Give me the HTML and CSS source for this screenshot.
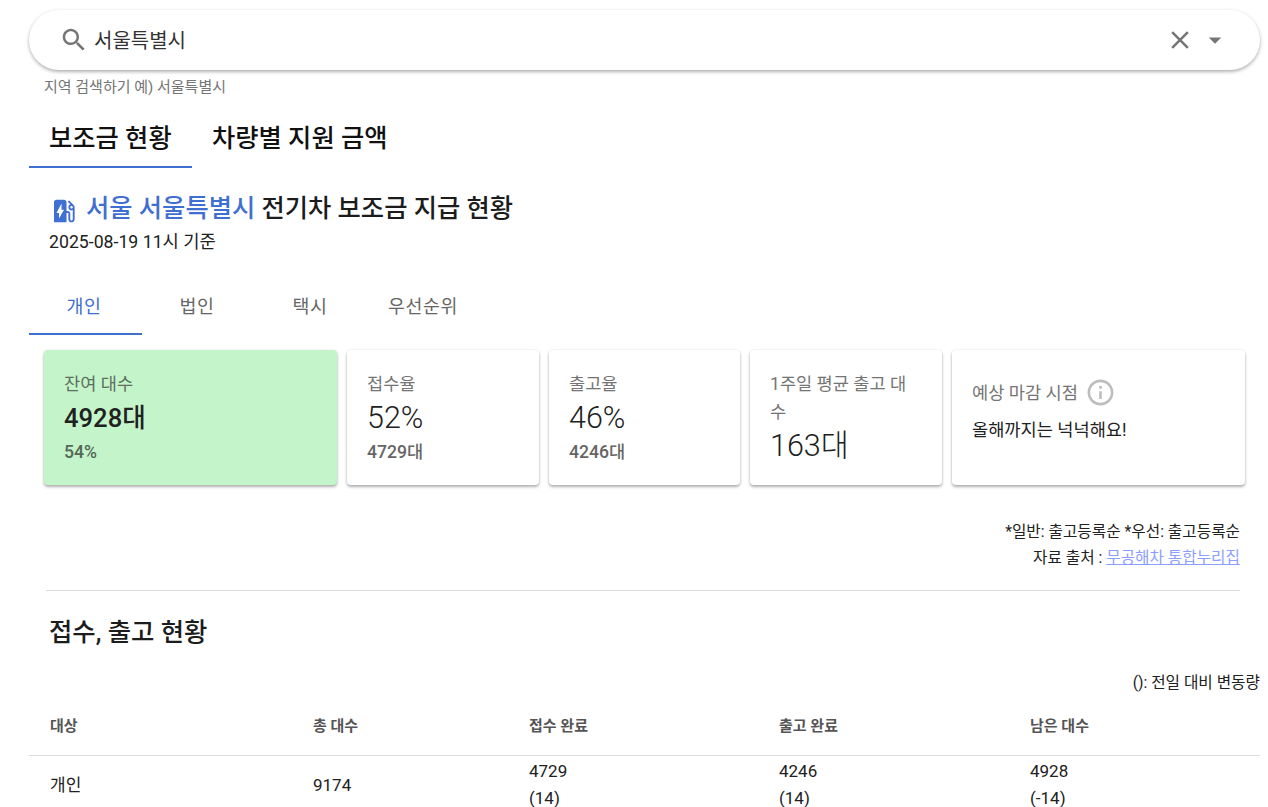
FILE: index.html
```html
<!DOCTYPE html>
<html lang="ko">
<head>
<meta charset="utf-8">
<title>전기차 보조금 지급 현황</title>
<link rel="stylesheet" href="styles.css">
</head>
<body>
<div class="page">
  <div class="search">
    <svg class="icon-search" viewBox="0 0 24 24"><path d="M15.5 14h-.79l-.28-.27C15.41 12.59 16 11.11 16 9.5 16 5.91 13.09 3 9.5 3S3 5.91 3 9.5 5.91 16 9.5 16c1.61 0 3.09-.59 4.23-1.57l.27.28v.79l5 4.99L20.49 19l-4.99-5zm-6 0C7.01 14 5 11.99 5 9.5S7.01 5 9.5 5 14 7.01 14 9.5 11.99 14 9.5 14z"/></svg>
    <span class="search-value">서울특별시</span>
    <svg class="icon-clear" viewBox="0 0 24 24"><path d="M19 6.41 17.59 5 12 10.59 6.41 5 5 6.41 10.59 12 5 17.59 6.41 19 12 13.41 17.59 19 19 17.59 13.41 12z"/></svg>
    <svg class="icon-drop" viewBox="0 0 24 24"><path d="M7 10l5 5 5-5z"/></svg>
  </div>
  <div class="helper">지역 검색하기 예) 서울특별시</div>

  <div class="main-tabs">
    <div class="main-tab active">보조금 현황</div>
    <div class="main-tab">차량별 지원 금액</div>
  </div>

  <div class="title-block">
    <h1 class="title"><svg class="icon-ev" viewBox="0 0 24 24"><path d="M19.77 7.23l.01-.01-3.72-3.72L15 4.56l2.11 2.11C16.17 7 15.5 7.9 15.5 9c0 1.38 1.12 2.5 2.5 2.5.36 0 .69-.08 1-.21v7.21c0 .55-.45 1-1 1s-1-.45-1-1V14c0-1.1-.9-2-2-2h-1V5c0-1.1-.9-2-2-2H6c-1.1 0-2 .9-2 2v16h10v-7.5h1.5v5c0 1.38 1.12 2.5 2.5 2.5s2.5-1.12 2.5-2.5V9c0-.69-.28-1.32-.73-1.77zM18 10c-.55 0-1-.45-1-1s.45-1 1-1 1 .45 1 1-.45 1-1 1zM8 18v-4.500H6L10 6v5h2l-4 7z"/></svg><span class="accent">서울 서울특별시</span> 전기차 보조금 지급 현황</h1>
    <div class="date">2025-08-19 11시 기준</div>
  </div>

  <div class="sub-tabs">
    <div class="sub-tab active">개인</div>
    <div class="sub-tab">법인</div>
    <div class="sub-tab">택시</div>
    <div class="sub-tab">우선순위</div>
  </div>

  <div class="cards">
    <div class="card card-green">
      <div class="card-label">잔여 대수</div>
      <div class="card-value strong">4928대</div>
      <div class="card-sub">54%</div>
    </div>
    <div class="card card-a">
      <div class="card-label">접수율</div>
      <div class="card-value">52%</div>
      <div class="card-sub">4729대</div>
    </div>
    <div class="card card-a">
      <div class="card-label">출고율</div>
      <div class="card-value">46%</div>
      <div class="card-sub">4246대</div>
    </div>
    <div class="card card-a">
      <div class="card-label">1주일 평균 출고 대수</div>
      <div class="card-value">163대</div>
    </div>
    <div class="card card-end">
      <div class="end-head">
        <span class="card-label">예상 마감 시점</span>
        <svg class="icon-info" viewBox="0 0 24 24"><path d="M11 7h2v2h-2zm0 4h2v6h-2zm1-9C6.48 2 2 6.48 2 12s4.480 10 10 10 10-4.480 10-10S17.520 2 12 2zm0 18c-4.410 0-8-3.590-8-8s3.590-8 8-8 8 3.590 8 8-3.590 8-8 8z"/></svg>
      </div>
      <div class="end-text">올해까지는 넉넉해요!</div>
    </div>
  </div>

  <div class="notes">
    <div>*일반: 출고등록순 *우선: 출고등록순</div>
    <div>자료 출처 : <a class="source" href="#">무공해차 통합누리집</a></div>
  </div>
  <hr class="divider">

  <h2 class="section-title">접수, 출고 현황</h2>
  <div class="table-note">(): 전일 대비 변동량</div>

  <div class="table">
    <div class="row head">
      <div>대상</div><div>총 대수</div><div>접수 완료</div><div>출고 완료</div><div>남은 대수</div>
    </div>
    <div class="row body-row">
      <div>개인</div><div>9174</div><div>4729<br>(14)</div><div>4246<br>(14)</div><div>4928<br>(-14)</div>
    </div>
  </div>
</div>
</body>
</html>
```
FILE: styles.css
```css
* { box-sizing: border-box; }
html, body { margin: 0; height: 807px; overflow: hidden; background: #fff; }
body { font-family: Roboto, "Noto Sans CJK KR", sans-serif; color: #212121; }
.page { padding: 10px 8px 0 29px; }

.search { height: 60px; width: 1231px; border-radius: 30px; background: #fff; display: flex; align-items: center; padding: 0 30px 0 30px; box-shadow: 0 2px 4px -1px rgba(0,0,0,.35), 0 1px 4px rgba(0,0,0,.1); }
.search svg { fill: #757575; flex: none; }
.icon-search { width: 30px; height: 30px; }
.search-value { flex: 1; font-size: 20px; margin: 0 0 2px 5px; color: #333; }
.icon-clear { width: 30px; height: 30px; margin-right: 5px; }
.icon-drop { width: 30px; height: 30px; }

.helper { margin: 8px 0 0 15px; font-size: 15px; line-height: 18px; color: #757575; }

.main-tabs { display: flex; margin-top: 12px; }
.main-tab { font-size: 25.3px; font-weight: 500; line-height: 32px; height: 60px; padding: 15px 20px 0; color: #111; white-space: nowrap; }
.main-tab.active { border-bottom: 2px solid #3f6fd0; width: 163px; }

.title-block { padding: 23px 0 0 20px; }
.title { margin: 0; font-size: 25.3px; font-weight: 500; line-height: 36px; color: #1c1c1c; }
.icon-ev { width: 30px; height: 30px; fill: #3f6fd0; margin-right: 7px; vertical-align: -9px; }
.accent { color: #3f6fd0; }
.date { font-size: 17.7px; line-height: 24px; margin-top: 3px; }

.sub-tabs { display: flex; margin-top: 25px; }
.sub-tab { width: 113px; height: 56px; font-size: 18.4px; letter-spacing: .6px; text-align: center; line-height: 56px; color: #666; padding-right: 3px; }
.sub-tab.active { color: #3f6fd0; border-bottom: 2px solid #3f6fd0; }

.cards { display: flex; gap: 10px; margin: 15px 0 0 15px; width: 1201px; height: 135px; }
.card { background: #fff; border-radius: 4px; padding: 20px; box-shadow: 0 2px 3px rgba(0,0,0,.3), 0 0 3px rgba(0,0,0,.08); }
.card-green { background: #c4f4c9; width: 293px; }
.card-a { width: 192px; }
.card-a:nth-child(3) { width: 191px; }
.card-end { width: 293px; }
.card-label { font-size: 17.6px; line-height: 28px; color: #757575; display: block; }
.card-green .card-label { color: #5d6f5f; }
.card-value { font-size: 30.5px; font-weight: 300; line-height: 40px; color: #212121; }
.card-value.strong { font-size: 25.6px; font-weight: 500; }
.card-sub { font-size: 17.6px; font-weight: 500; line-height: 26px; margin-top: 1px; color: #666; }
.card-green .card-sub { color: #546856; }
.end-head { display: flex; align-items: center; gap: 7px; margin-top: 7px; }
.icon-info { width: 31px; height: 31px; fill: #bdbdbd; }
.end-text { font-size: 17.6px; line-height: 24px; margin-top: 10px; color: #212121; }

.notes { margin: 34px 20px 0 0; text-align: right; font-size: 15.7px; line-height: 26px; color: #212121; }
.source { color: #8c9eff; }
.divider { border: 0; border-top: 1px solid #ddd; margin: 19px 20px 0 17px; }

.section-title { margin: 23px 0 0 20px; font-size: 25.4px; font-weight: 500; line-height: 36px; color: #1c1c1c; }
.table-note { margin-top: 23px; text-align: right; font-size: 15.7px; line-height: 20px; color: #212121; }

.table { margin-top: 6px; }
.row { display: grid; grid-template-columns: 263px 216px 250px 251px 1fr; padding-left: 21px; font-size: 17px; line-height: 27px; color: #212121; align-items: center; }
.row.head { height: 57px; padding-bottom: 2px; font-size: 15px; font-weight: 700; color: #555; border-bottom: 1px solid #ddd; }
.body-row { padding-top: 2px; }
```
